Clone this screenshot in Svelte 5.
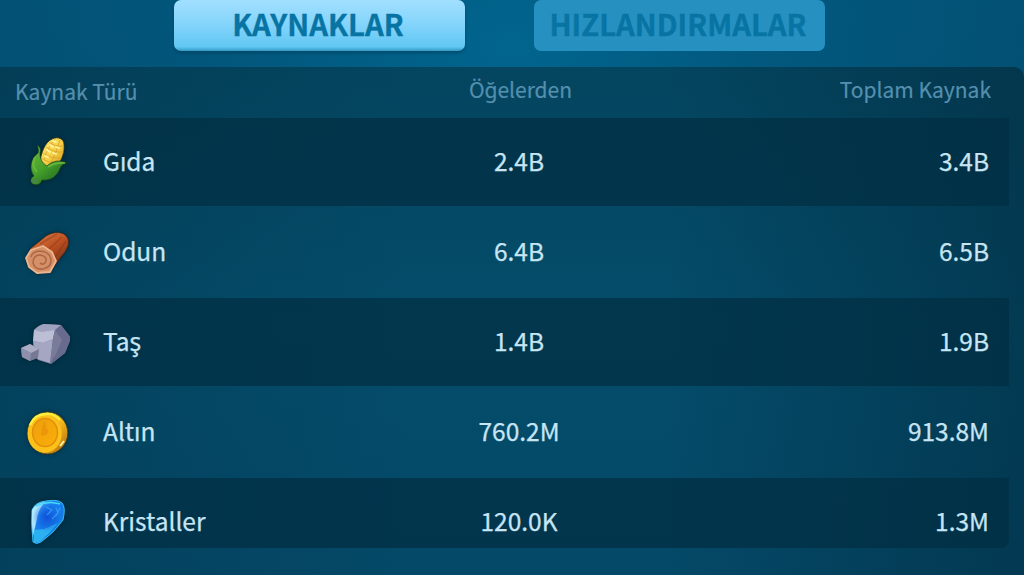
<script lang="ts">
  type Resource = {
    id: string;
    name: string;
    fromItems: string;
    total: string;
  };

  const tabs = [
    { id: 'resources', label: 'KAYNAKLAR' },
    { id: 'speedups', label: 'HIZLANDIRMALAR' }
  ];

  const resources: Resource[] = [
    { id: 'food', name: 'Gıda', fromItems: '2.4B', total: '3.4B' },
    { id: 'wood', name: 'Odun', fromItems: '6.4B', total: '6.5B' },
    { id: 'stone', name: 'Taş', fromItems: '1.4B', total: '1.9B' },
    { id: 'gold', name: 'Altın', fromItems: '760.2M', total: '913.8M' },
    { id: 'crystal', name: 'Kristaller', fromItems: '120.0K', total: '1.3M' }
  ];

  let active = $state('resources');
</script>

<main class="screen">
  <nav class="tabs">
    {#each tabs as tab (tab.id)}
      <button
        class="tab"
        class:tab--active={active === tab.id}
        onclick={() => (active = tab.id)}
      >
        {tab.label}
      </button>
    {/each}
  </nav>

  <section class="panel">
    <header class="head">
      <span class="head__type">Kaynak Türü</span>
      <span class="head__items">Öğelerden</span>
      <span class="head__total">Toplam Kaynak</span>
    </header>

    {#each resources as item (item.id)}
      <div class="row row--{item.id}">
        <svg class="icon" viewBox="0 0 60 60" width="60" height="60" aria-hidden="true">
          {#if item.id === 'food'}
            <defs>
              <linearGradient id="husk" x1=".1" y1="0" x2=".8" y2="1">
                <stop offset="0" stop-color="#6cb83c" />
                <stop offset=".5" stop-color="#459f2a" />
                <stop offset="1" stop-color="#1d6420" />
              </linearGradient>
              <linearGradient id="cob" x1="0" y1="0" x2="1" y2="1">
                <stop offset="0" stop-color="#ffe976" />
                <stop offset=".55" stop-color="#f6cd42" />
                <stop offset="1" stop-color="#cf951c" />
              </linearGradient>
            </defs>
            <path d="M30 32C31 23 35 12 42 9c6-3 12 0 12 5 1 8-2 16-7 22l-14 2Z" fill="url(#cob)" stroke="#16301f" stroke-width=".8" />
            <path d="M39 12q6 5 15 4M36 17q8 6 18 5M33 23q8 6 18 5M31 28q7 5 17 5M45 9q-9 11-11 21M50 10q-4 13-9 23" fill="none" stroke="#d19b28" stroke-width="1" opacity=".65" />
            <path d="M43 11l3 1M40 15l3 2M46 17l3 1M37 20l3 2M43 23l3 1M35 26l3 1" stroke="#fff7a0" stroke-width="1.8" stroke-linecap="round" />
            <path d="M27 15c3 2 4 4 3 8 0 6 2 10 7 13 6-6 14-6 20-3-5 1-6 3-8 8-4 7-10 10-17 9-1 4-5 6-9 4-3-2-3-6 1-8-5-6-4-17 4-23 1-3 0-5-1-8Z" fill="url(#husk)" stroke="#17441c" stroke-width=".7" />
            <path d="M25 27c-3 6-2 11 2 15" fill="none" stroke="#7cc143" stroke-width="2" opacity=".6" />
            <path d="M38 37q8-5 17-4" fill="none" stroke="#69b43b" stroke-width="1.6" />
            <ellipse cx="24.5" cy="51" rx="3.3" ry="2.7" fill="#46883f" />
          {:else if item.id === 'wood'}
            <defs>
              <linearGradient id="bark" x1=".2" y1="0" x2=".8" y2="1">
                <stop offset="0" stop-color="#d97b42" />
                <stop offset=".45" stop-color="#b94e20" />
                <stop offset="1" stop-color="#692814" />
              </linearGradient>
            </defs>
            <path d="M20 29L36 16q10-6 18-2 6 4 4 12-2 6-7 11l-11 15Z" fill="url(#bark)" stroke="#352623" stroke-width=".7" />
            <path d="M30 24L47 14M39 29L52 17M45 37L56 21" stroke="#7a2e17" stroke-width="1.6" opacity=".35" />
            <path d="M21 30l12-4 9 6 4 9-6 11-13 1-8-6-3-9Z" fill="#d69068" stroke="#edb58d" stroke-width="1.8" stroke-linejoin="round" />
            <path d="M21 37q1-5 8-6 10 0 12 8 1 8-8 10-8 1-10-6 0-8 7-8 7 1 6 6-2 5-6 2" fill="none" stroke="#ad6747" stroke-width="1.6" />
          {:else if item.id === 'stone'}
            <path d="M24 20q5-5 10-6l17 1 10 13-6 15-14 11-13-4-5-15Z" fill="#77789c" />
            <path d="M24 20q5-5 10-6l17 1-6 6-13 3Z" fill="#9fa2bf" />
            <path d="M24 20l8 2 13-2-2 9-10 4-10-2Z" fill="#bcbed5" />
            <path d="M23 31l10 2 10-4-3 24-13-4Z" fill="#a5a6c1" />
            <path d="M45 20l6-5 10 13-6 15-14 11 2-25Z" fill="#696b8e" />
            <path d="M45 20l7 10-6 14-6 9 3-24Z" fill="#797b99" />
            <path d="M11 38l9-4 9 5-1 9-8 3-8-4Z" fill="#777994" />
            <path d="M11 38l9-4 9 5-8 4Z" fill="#abadc4" />
            <path d="M11 38l10 5-1 8-8-4Z" fill="#8d90ad" />
          {:else if item.id === 'gold'}
            <defs>
              <linearGradient id="coin" x1="0" y1="0" x2="1" y2="1">
                <stop offset="0" stop-color="#ffe62f" />
                <stop offset=".55" stop-color="#f2b51b" />
                <stop offset="1" stop-color="#a9640f" />
              </linearGradient>
              <linearGradient id="face" x1="0" y1="0" x2="1" y2="1">
                <stop offset="0" stop-color="#ee9f0c" />
                <stop offset="1" stop-color="#fbae09" />
              </linearGradient>
            </defs>
            <ellipse cx="37.5" cy="33" rx="20.3" ry="21" fill="url(#coin)" stroke="#344328" stroke-width=".8" />
            <ellipse cx="34.7" cy="34" rx="17" ry="18.7" fill="#fbc019" />
            <ellipse cx="35" cy="32.5" rx="12.5" ry="14" fill="url(#face)" stroke="#e0900c" stroke-width="1.5" />
            <path d="M32 27q2-2 2-6 3 3 2 7 3 2 2 5-3 4-7 2Z" fill="#dc850a" opacity=".4" />
            <path d="M20 25q5-11 16-11 8-1 14 6" fill="none" stroke="#ffed3d" stroke-width="2.4" />
            <path d="M50 46l4-5" stroke="#fff1a5" stroke-width="2" />
          {:else}
            <defs>
              <linearGradient id="gem" x1="0" y1="0" x2="1" y2="1">
                <stop offset="0" stop-color="#69d2ff" />
                <stop offset=".35" stop-color="#1881ef" />
                <stop offset=".65" stop-color="#147be5" />
                <stop offset="1" stop-color="#20cefb" />
              </linearGradient>
              <radialGradient id="core">
                <stop offset="0" stop-color="#1052d8" />
                <stop offset="1" stop-color="#1052d8" stop-opacity="0" />
              </radialGradient>
            </defs>
            <path d="M22 22q3-8 14-9 12-2 16 2 4 4 1 17-9 13-22 22-5 3-8 0-2-16-1-32Z" fill="url(#gem)" stroke="#33bdec" />
            <path d="M22 22q4-7 13-8-7 8-8 17l-4 17q-2-13-1-26Z" fill="#caf6ff" opacity=".8" />
            <path d="M24 42l10-1 14-6q-8 10-17 18-4 3-7 1Z" fill="#34c6f5" opacity=".7" />
            <ellipse cx="37" cy="29" rx="14" ry="15" fill="url(#core)" />
            <path d="M36 19l6 3-5 5M46 20l2 5-6 6M50 20l-4 8" fill="none" stroke="#4aaeff" stroke-width="1.1" opacity=".65" />
            <path d="M26 18q12-6 24-2" fill="none" stroke="#48d7ff" stroke-width="1.5" />
          {/if}
        </svg>
        <span class="name">{item.name}</span>
        <span class="amount">{item.fromItems}</span>
        <span class="amount amount--total">{item.total}</span>
      </div>
    {/each}
  </section>
</main>

<style>
  :global(body) {
    margin: 0;
    overflow: hidden;
  }

  .screen {
    box-sizing: border-box;
    width: 1024px;
    height: 575px;
    overflow: hidden;
    background:
      radial-gradient(ellipse 62% 75% at 50% 8%, #01658e 0%, rgb(2 91 130 / .75) 42%, transparent 100%),
      linear-gradient(#034e70, #044565);
    font-family: 'Noto Sans CJK SC', 'Noto Sans', sans-serif;
  }

  .tabs {
    display: flex;
    gap: 69px;
    height: 67px;
    padding-left: 174px;
  }

  .tab {
    box-sizing: border-box;
    width: 291px;
    height: 51px;
    padding: 0 3px 6px 0;
    border: 0;
    border-radius: 7px;
    background: #2690c1;
    color: #0874a3;
    font: 700 29.3px/44px 'Noto Sans CJK SC', sans-serif;
    white-space: nowrap;
    -webkit-text-stroke: .3px currentColor;
  }

  .tab--active {
    background: linear-gradient(#a2e0ff, #83d4fb 48%, #61c7f3 92%, #329ac4);
    box-shadow: 0 2px 3px rgb(2 56 82 / .5);
  }

  .panel {
    height: 508px;
    border-radius: 0 10px 0 0;
    background:
      linear-gradient(90deg, rgb(2 48 70 / .35), transparent 40%, transparent 65%, rgb(2 43 63 / .55)),
      linear-gradient(#04455f, #044d6b 50%, #044968);
  }

  .head,
  .row {
    display: grid;
    grid-template-columns: 103px 315px 202px 1fr;
    align-items: center;
  }

  .head {
    height: 51px;
    color: #548fae;
    font-size: 21px;
    line-height: 30px;
    -webkit-text-stroke: .2px currentColor;
  }

  .head__type {
    grid-column: 1 / 3;
    padding: 0 0 3px 15px;
  }

  .head__items {
    padding: 0 0 8px 3px;
    text-align: center;
  }

  .head__total {
    padding: 0 33px 8px 0;
    text-align: right;
  }

  .row {
    height: 92px;
    color: #c7e5f3;
    font-size: 24.5px;
    line-height: 36px;
    -webkit-text-stroke: .25px currentColor;
  }

  .row:nth-child(even) {
    width: 1009px;
    height: 88px;
    background: rgb(2 45 66 / .7);
  }

  .row--crystal:nth-child(even) {
    height: 70px;
    border-radius: 0 0 8px 0;
    align-items: start;
  }

  .row > span {
    padding-bottom: 3px;
  }

  .row--crystal > span {
    padding-top: 25px;
  }

  .icon {
    margin: 0 0 4px 10px;
    filter: drop-shadow(0 0 2px rgb(0 25 35 / .65));
  }

  .row--crystal .icon {
    margin-top: 10px;
  }

  .amount {
    text-align: center;
  }

  .row .amount--total {
    padding-right: 20px;
    text-align: right;
  }

  .row:nth-child(odd) .amount--total {
    padding-right: 35px;
  }
</style>
